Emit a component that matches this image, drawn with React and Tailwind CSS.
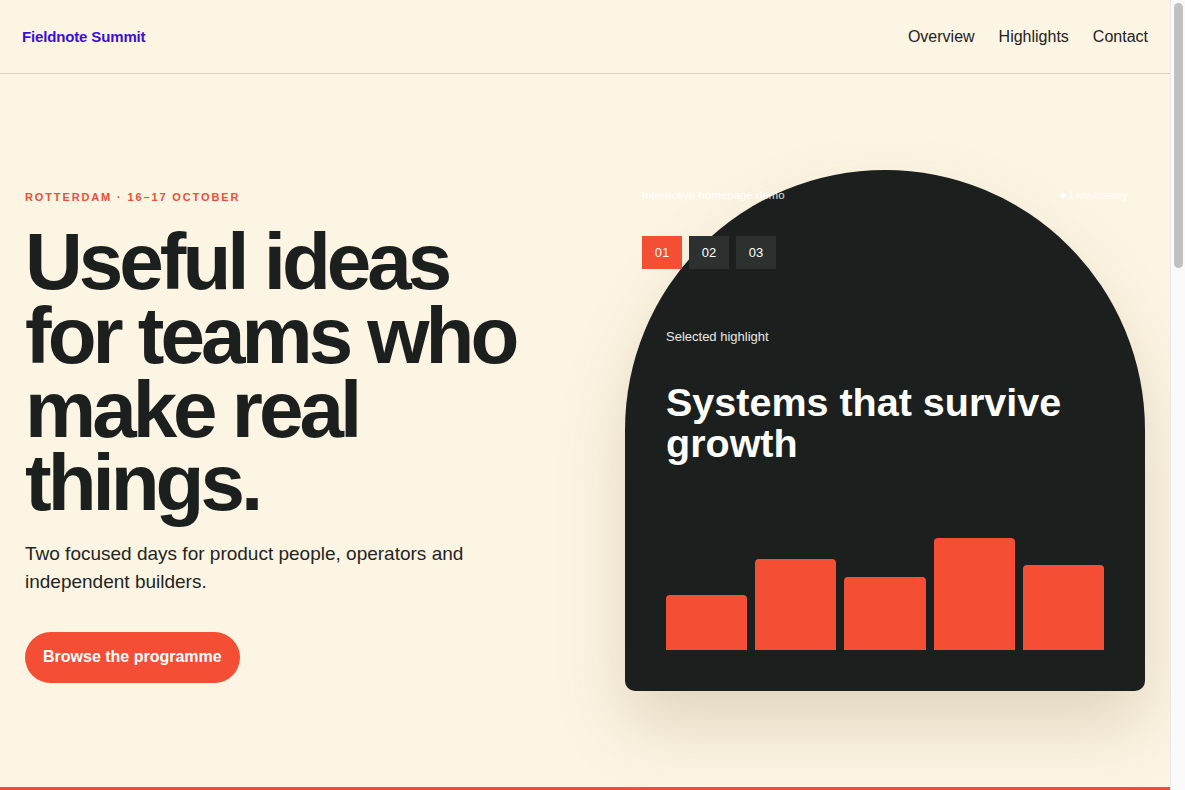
import { useState } from 'react';

const bars = [55, 91, 73, 112, 85];

const highlights = [
  { id: '01', title: 'Systems that survive growth' },
  { id: '02', title: 'Shipping small, learning fast' },
  { id: '03', title: 'Operators who build the tools' },
];

function Header() {
  return (
    <header className="h-[74px] pt-px flex items-center justify-between px-[22px] border-b border-[#d8d2c6]">
      <a href="#" className="text-[15px] font-bold tracking-[-0.01em] text-[#3b0fd9]">
        Fieldnote Summit
      </a>
      <nav className="flex items-center gap-6 text-base text-[#1f2220]">
        <a href="#">Overview</a>
        <a href="#">Highlights</a>
        <a href="#">Contact</a>
      </nav>
    </header>
  );
}

function HighlightCard() {
  const [active, setActive] = useState(0);
  const current = highlights[active];

  return (
    <div className="h-[521px] flex flex-col p-[17px] bg-[#1b1f1d] rounded-t-[260px] rounded-b-[10px] shadow-[0_34px_70px_rgba(110,85,40,0.2)]">
      <div className="flex items-center justify-between text-[11.5px] leading-4 text-white/85">
        <span>Interactive homepage demo</span>
        <span>● Live history</span>
      </div>

      <div className="flex gap-[7px] mt-[33px]">
        {highlights.map((h, i) => (
          <button
            key={h.id}
            onClick={() => setActive(i)}
            className={`w-[40px] h-[33px] text-[13px] text-white ${i === active ? 'bg-[#f44e34]' : 'bg-[#2c302f]'}`}
          >
            {h.id}
          </button>
        ))}
      </div>

      <div className="flex-1 flex flex-col px-6 pb-6 pt-[60px]">
        <p className="text-[13px] leading-4 text-white/90">Selected highlight</p>
        <h2 className="mt-[37px] text-[39.5px] leading-[41px] font-bold text-white max-w-[430px]">{current.title}</h2>

        <div className="mt-auto flex items-end gap-2 h-[112px]">
          {bars.map((b, i) => (
            <div key={i} className="flex-1 bg-[#f44e34] rounded-t-[4px]" style={{ height: b }} />
          ))}
        </div>
      </div>
    </div>
  );
}

// browser-style scrollbar at the window edge
function ScrollTrack() {
  return (
    <div className="fixed top-0 right-0 h-screen w-[15px] bg-[#fafafa] border-l border-[#e8e8e8]">
      <div className="mx-auto mt-[3px] w-[9px] h-[265px] rounded-full bg-[#c1c1c1]" />
    </div>
  );
}

export default function App() {
  return (
    <div className="min-h-screen pr-[15px] bg-[#fdf5e4] text-[#1b1f1d] font-['Liberation_Sans',Arial,sans-serif]">
      <Header />

      {/* Hero */}
      <section className="h-[713px] grid grid-cols-2 gap-20 items-center px-[25px]">
        <div className="pt-[11px]">
          <p className="text-[11px] leading-4 font-bold uppercase tracking-[0.17em] text-[#f04e35]">
            Rotterdam · 16–17 October
          </p>
          <h1 className="mt-5 text-[80px] leading-[0.92] font-bold tracking-[-0.05em] text-[#1b1f1d]">
            Useful ideas for teams who make real things.
          </h1>
          <p className="mt-5 max-w-[480px] text-[19px] leading-7 text-[#222523]">
            Two focused days for product people, operators and independent builders.
          </p>
          <a
            href="#"
            className="mt-9 inline-flex items-center h-[51px] px-[18px] rounded-full bg-[#f44e34] text-base font-bold text-white"
          >
            Browse the programme
          </a>
        </div>

        <HighlightCard />
      </section>

      {/* Below the fold */}
      <section className="border-t-4 border-[#f04e35] h-[1516px]" />

      <ScrollTrack />
    </div>
  );
}
